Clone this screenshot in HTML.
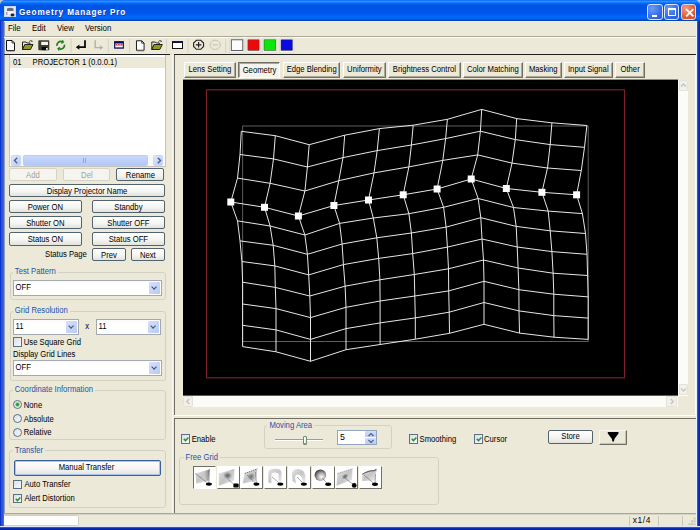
<!DOCTYPE html>
<html><head><meta charset="utf-8">
<style>
*{box-sizing:border-box;margin:0;padding:0}
html,body{width:700px;height:530px;overflow:hidden;background:#ece9d8}
body{position:relative;font-family:"Liberation Sans",sans-serif;font-size:7.7px;color:#000}
.a{position:absolute}
.t{position:absolute;white-space:nowrap;line-height:1;transform:translateY(0.4px) scaleY(1.12);transform-origin:0 84%}
.s{display:inline-block;transform:translateY(0.6px) scaleY(1.12);transform-origin:50% 80%}
/* XP button */
.btn{position:absolute;border:1px solid #53636e;border-radius:2px;background:linear-gradient(#fefefe 0%,#f5f5f1 55%,#e2e3de 100%);text-align:center;white-space:nowrap;line-height:11px;font-size:7.7px;color:#000}
.btn.dis{border-color:#d6d3c6;color:#a3a293;background:#f5f4ef}
.gb{position:absolute;border:1px solid #d3d1c3;border-radius:3px}
.gbl{position:absolute;transform:translateY(0.7px) scaleY(1.12);transform-origin:0 84%;color:#2354a8;background:#ece9d8;padding:0 2px;white-space:nowrap;line-height:1;font-size:7.7px}
.combo{position:absolute;border:1px solid #a3a9ae;background:linear-gradient(#fbfbfb,#fff 40%,#fdfdfc)}
.combo .dd{position:absolute;right:1px;top:1px;bottom:1px;width:11px;background:linear-gradient(135deg,#d6e0fa,#b8caf4);border-radius:1px}
.combo .dd:after{content:"";position:absolute;left:3.1px;top:2.6px;width:3.2px;height:3.2px;border-right:1.7px solid #3e4f70;border-bottom:1.7px solid #3e4f70;transform:rotate(45deg)}
.cb{position:absolute;width:9.2px;height:9.5px;border:1px solid #5b7084;background:linear-gradient(135deg,#d9e1e8,#f6f8fa)}
.rb{position:absolute;width:9px;height:9px;border:1px solid #5b7084;border-radius:50%;background:linear-gradient(135deg,#d9e1e8,#f6f8fa)}
.tab{position:absolute;top:62px;height:16px;border:1px solid;border-color:#fff #716f64 #716f64 #fff;box-shadow:inset -1px -1px 0 #aca899;text-align:center;line-height:14px;font-size:7.7px;white-space:nowrap}
.fg{position:absolute;top:466px;width:23px;height:23px;background:#fff;border:1px solid;border-color:#fff #716f64 #716f64 #fff}
</style></head><body>
<!-- frame -->
<div class="a" style="left:0;top:0;width:700px;height:8px;background:#b8c6e2"></div>
<div class="a" style="left:0;top:0;width:700px;height:22px;background:linear-gradient(#0058ee 0%,#3593ff 5%,#288eff 8%,#127dff 11%,#036ffc 14%,#0262ee 18%,#0057e5 24%,#0054e3 30%,#0055eb 56%,#005bf5 66%,#026afe 76%,#0062ef 84%,#0052d6 90%,#0040ab 95%,#003092 100%);border-radius:5px 5px 0 0"></div>
<div class="a" style="left:0;top:21px;width:4.5px;height:509px;background:linear-gradient(90deg,#0022cc,#2452d8 30%,#2f5ccc 60%,#6f82b0 85%,#c8cac8)"></div>
<div class="a" style="left:696px;top:21px;width:4px;height:509px;background:linear-gradient(90deg,#f4f8ff 0%,#e8eefa 18%,#5a78c0 28%,#1c3aa8 45%,#0a20a0 100%)"></div>
<div class="a" style="left:0;top:526px;width:700px;height:4px;background:linear-gradient(#e6eaf8 0%,#e0e6f8 15%,#4a6ac0 30%,#0a34b8 50%,#001e98 100%)"></div>
<div class="a" style="left:4px;top:21px;width:692px;height:1px;background:#e8ecf8"></div>
<!-- app icon -->
<svg class="a" style="left:4px;top:6px" width="12" height="11" viewBox="0 0 12 11"><rect x="0" y="0" width="12" height="11" fill="#dfe9f7"/><rect x="0.5" y="0.5" width="11" height="10" fill="none" stroke="#c9d8f2" stroke-width="1"/><path d="M3 2.5Q6 0.8 9.5 2.5V5H3Z" fill="#6d6a78"/><path d="M3.5 5H9V8H3.5Z" fill="#f4f1f0"/><ellipse cx="8.5" cy="9" rx="2" ry="1.4" fill="#222"/><rect x="2" y="6" width="1.5" height="3" fill="#b0aab0"/></svg>
<div class="t" style="left:18.9px;top:8.6px;font-size:8.2px;font-weight:bold;letter-spacing:0.86px;color:#fff;text-shadow:0.7px 0.7px 0 #1a3aa0">Geometry Manager Pro</div>
<!-- title buttons -->
<div class="a" style="left:647.2px;top:4px;width:15.4px;height:16px;border:1px solid #d8e4fb;border-radius:3px;background:radial-gradient(circle at 30% 25%,#6d9cfb,#3a6fe8 55%,#2458d6)"><div class="a" style="left:4px;top:9.5px;width:5px;height:2px;background:#fff"></div></div>
<div class="a" style="left:663.8px;top:4px;width:15.2px;height:16px;border:1px solid #d8e4fb;border-radius:3px;background:radial-gradient(circle at 30% 25%,#6d9cfb,#3a6fe8 55%,#2458d6)"><div class="a" style="left:3px;top:3px;width:8px;height:7.5px;border:1px solid #fff;border-top-width:2px"></div></div>
<div class="a" style="left:681px;top:4px;width:15.2px;height:16px;border:1px solid #e8d8f0;border-radius:3px;background:radial-gradient(circle at 30% 25%,#f49a7c,#e0613a 55%,#cc4a22)">
<svg class="a" style="left:2.5px;top:2.5px" width="10" height="10" viewBox="0 0 10 10"><path d="M1.2 1.2L8.4 8.4M8.4 1.2L1.2 8.4" stroke="#fff" stroke-width="1.7"/></svg></div>
<!-- menu -->
<div class="t" style="left:8px;top:25px;font-size:7.9px">File</div>
<div class="t" style="left:32px;top:25px;font-size:7.9px">Edit</div>
<div class="t" style="left:57px;top:25px;font-size:7.9px">View</div>
<div class="t" style="left:85px;top:25px;font-size:7.9px">Version</div>
<div class="a" style="left:4px;top:36px;width:692px;height:1px;background:#aca899"></div>
<div class="a" style="left:4px;top:37px;width:692px;height:1px;background:#fff"></div>
<!-- toolbar dark line -->
<div class="a" style="left:4px;top:54px;width:166px;height:1px;background:#1e1e1e"></div>
<div class="a" style="left:174px;top:54px;width:522px;height:1px;background:#1e1e1e"></div>
<!-- toolbar icons -->
<svg class="a" style="left:0;top:37px" width="300" height="17" viewBox="0 37 300 17">
<defs>
<g id="doc"><path d="M0.5 0.5H6L8.5 3V10.5H0.5Z" fill="#fdfdfd" stroke="#111" stroke-width="1"/><path d="M6 0.5V3H8.5" fill="none" stroke="#111" stroke-width="0.8"/><path d="M1 11.2H8.5" stroke="#888" stroke-width="0.8"/></g>
<g id="fold"><path d="M0.5 2.5H4L5 3.5H8V5H3L0.5 10Z" fill="#f0eab0" stroke="#222" stroke-width="1"/><path d="M0.5 10L2.8 5H11L8.5 10Z" fill="#8f9a1c" stroke="#222" stroke-width="1"/><path d="M7 2.2Q8.5 0 10.5 1.8" fill="none" stroke="#555" stroke-width="1"/><path d="M9.5 0.8L10.8 2.2L9.2 2.8" fill="#555"/></g>
</defs>
<use href="#doc" x="6" y="40"/>
<use href="#fold" x="22" y="39.5"/>
<!-- floppy -->
<rect x="38.3" y="40.3" width="11" height="10" rx="0.8" fill="#3b3b30"/>
<rect x="41.2" y="41.8" width="6.8" height="3.2" fill="#f2f2ec"/>
<rect x="41.8" y="47" width="4.8" height="3.2" fill="#050505"/>
<rect x="46" y="48" width="1.8" height="1.8" fill="#e8e8e8"/>
<!-- refresh -->
<path d="M56.96 45.96A3.8 3.8 0 0 1 62 41.73" fill="none" stroke="#1f7f1f" stroke-width="1.7"/>
<path d="M61.39 43.42L62.61 40.04L63.9 42.4Z" fill="#1f7f1f" stroke="#1f7f1f" stroke-width="0.6"/>
<path d="M64.44 44.64A3.8 3.8 0 0 1 59.4 48.87" fill="none" stroke="#1f7f1f" stroke-width="1.7"/>
<path d="M60.01 47.18L58.79 50.56L57.5 48.2Z" fill="#1f7f1f" stroke="#1f7f1f" stroke-width="0.6"/>
<rect x="70.6" y="39" width="1" height="14" fill="#d6d3c4"/>
<!-- enter arrow -->
<path d="M85 40.2V47.2H78" fill="none" stroke="#0a0a0a" stroke-width="1.8"/>
<path d="M75.8 47.2L79.4 44.6V49.8Z" fill="#0a0a0a"/>
<!-- disabled arrow -->
<path d="M95.2 40.2V47.6H101" fill="none" stroke="#b4b2a6" stroke-width="1.4"/>
<path d="M103.2 47.6L100 45.2V50Z" fill="#b4b2a6"/>
<rect x="107.8" y="39" width="1" height="14" fill="#d6d3c4"/>
<!-- display icon -->
<rect x="114.1" y="41.1" width="9.8" height="7.6" fill="#0a0a50"/>
<rect x="115.2" y="43.4" width="7.6" height="2.4" fill="#d8c8e0"/>
<rect x="115.2" y="45.8" width="7.6" height="1.6" fill="#f4f4f8"/>
<path d="M115.6 44.6H122.5" stroke="#c82848" stroke-width="1" stroke-dasharray="1.6 0.9"/>
<rect x="129.1" y="39" width="1" height="14" fill="#d6d3c4"/>
<use href="#doc" x="136" y="40.3" transform="translate(136 40.3) scale(0.95) translate(-136 -40.3)"/>
<use href="#fold" x="151.3" y="39.5"/>
<rect x="166" y="39" width="1" height="14" fill="#d6d3c4"/>
<!-- window icon -->
<rect x="172.5" y="41.5" width="10" height="7" fill="#fff" stroke="#111" stroke-width="1"/>
<rect x="172.5" y="41" width="10" height="2" fill="#101050"/>
<rect x="187.6" y="39" width="1" height="14" fill="#d6d3c4"/>
<!-- plus octagon -->
<path d="M196.4 40.3H200.8L203.6 43.1V46.5L200.8 49.3H196.4L193.6 46.5V43.1Z" fill="none" stroke="#222" stroke-width="1.1"/>
<path d="M198.6 42V47.6M195.8 44.8H201.4" stroke="#222" stroke-width="1.2"/>
<!-- minus octagon disabled -->
<path d="M213 40.3H217.4L220.2 43.1V46.5L217.4 49.3H213L210.2 46.5V43.1Z" fill="none" stroke="#c4c2b6" stroke-width="1"/>
<path d="M212.4 44.8H218" stroke="#c4c2b6" stroke-width="1"/>
<rect x="225.2" y="39" width="1" height="14" fill="#d6d3c4"/>
<!-- color swatches -->
<rect x="229.6" y="38" width="14.4" height="15" rx="1.5" fill="#f6f5ef" stroke="#d8d6ca" stroke-width="0.8"/>
<rect x="231.3" y="39.8" width="11.5" height="10.6" fill="#fcfcfc" stroke="#3a3a3a" stroke-width="0.8"/>
<rect x="246.2" y="38" width="14.4" height="15" rx="1.5" fill="#f6f5ef" stroke="#d8d6ca" stroke-width="0.8"/>
<rect x="247.9" y="39.8" width="11.2" height="10.6" fill="#ee0a0a" stroke="#3a3a3a" stroke-width="0.5"/>
<rect x="262.4" y="38" width="14.4" height="15" rx="1.5" fill="#f6f5ef" stroke="#d8d6ca" stroke-width="0.8"/>
<rect x="264" y="39.8" width="11.8" height="10.6" fill="#0ae80a" stroke="#3a3a3a" stroke-width="0.5"/>
<rect x="279.4" y="38" width="14.4" height="15" rx="1.5" fill="#f6f5ef" stroke="#d8d6ca" stroke-width="0.8"/>
<rect x="281" y="39.8" width="11.4" height="10.6" fill="#0a0ae0" stroke="#3a3a3a" stroke-width="0.5"/>
</svg>
<!-- LEFT PANEL -->
<div class="a" style="left:8.5px;top:55px;width:157px;height:112px;background:#fff;border:1px solid #c4c4bc;border-top:none"></div>
<div class="a" style="left:9.5px;top:56.8px;width:155px;height:10.9px;background:#ece9d8"></div>
<div class="t" style="left:13px;top:58.8px">01</div>
<div class="t" style="left:32.5px;top:58.8px">PROJECTOR 1 (0.0.0.1)</div>
<!-- list h scrollbar -->
<div class="a" style="left:9.5px;top:155px;width:155px;height:11px;background:#f8f8f4"></div>
<div class="a" style="left:10.8px;top:155.3px;width:10.4px;height:10.3px;background:linear-gradient(135deg,#dfe8fd,#b9cbf6);border-radius:1.5px;border:1px solid #c8d6f8"></div>
<svg class="a" style="left:13px;top:157px" width="6" height="7" viewBox="0 0 6 7"><path d="M4.2 0.8L1.5 3.5L4.2 6.2" fill="none" stroke="#4d6185" stroke-width="1.4"/></svg>
<div class="a" style="left:23px;top:155.3px;width:125px;height:10.3px;background:linear-gradient(#c9d8fc,#b3c8f6);border-radius:1.5px;border:1px solid #bccbf2"></div>
<div class="a" style="left:83px;top:158px;width:3px;height:5px;border-left:1px solid #8ea6e6;border-right:1px solid #8ea6e6"></div>
<div class="a" style="left:153px;top:155.3px;width:10.4px;height:10.3px;background:linear-gradient(135deg,#dfe8fd,#b9cbf6);border-radius:1.5px;border:1px solid #c8d6f8"></div>
<svg class="a" style="left:155.5px;top:157px" width="6" height="7" viewBox="0 0 6 7"><path d="M1.8 0.8L4.5 3.5L1.8 6.2" fill="none" stroke="#4d6185" stroke-width="1.4"/></svg>
<!-- buttons -->
<div class="btn dis" style="left:9.3px;top:168.3px;width:47.3px;height:13px"><span class="s">Add</span></div>
<div class="btn dis" style="left:63.4px;top:168.3px;width:47px;height:13px"><span class="s">Del</span></div>
<div class="btn" style="left:116.3px;top:168.4px;width:48.2px;height:12.8px"><span class="s">Rename</span></div>
<div class="btn" style="left:9px;top:184.3px;width:156px;height:13px"><span class="s">Display Projector Name</span></div>
<div class="btn" style="left:9.2px;top:200.4px;width:72.4px;height:12.8px"><span class="s">Power ON</span></div>
<div class="btn" style="left:92px;top:200.4px;width:72.8px;height:12.8px"><span class="s">Standby</span></div>
<div class="btn" style="left:9.2px;top:216.4px;width:72.4px;height:12.9px"><span class="s">Shutter ON</span></div>
<div class="btn" style="left:92px;top:216.4px;width:72.8px;height:12.9px"><span class="s">Shutter OFF</span></div>
<div class="btn" style="left:9.2px;top:232.4px;width:72.4px;height:13.2px"><span class="s">Status ON</span></div>
<div class="btn" style="left:92px;top:232.4px;width:72.8px;height:13.2px"><span class="s">Status OFF</span></div>
<div class="t" style="left:45px;top:250.5px">Status Page</div>
<div class="btn" style="left:92px;top:247.8px;width:34px;height:13px"><span class="s">Prev</span></div>
<div class="btn" style="left:130.6px;top:247.8px;width:34.4px;height:13px"><span class="s">Next</span></div>
<!-- Test pattern -->
<div class="gb" style="left:9.5px;top:271.5px;width:156px;height:28px"></div>
<div class="gbl" style="left:12.8px;top:266.5px">Test Pattern</div>
<div class="combo" style="left:13.2px;top:280px;width:148.6px;height:15.7px"><div class="dd"></div></div>
<div class="t" style="left:15.6px;top:284.3px">OFF</div>
<!-- Grid resolution -->
<div class="gb" style="left:9.5px;top:311px;width:156px;height:69.5px"></div>
<div class="gbl" style="left:12.8px;top:306.0px">Grid Resolution</div>
<div class="combo" style="left:13.2px;top:319px;width:65.4px;height:15.6px"><div class="dd"></div></div>
<div class="t" style="left:15.6px;top:323.3px">11</div>
<div class="t" style="left:85.3px;top:323px">x</div>
<div class="combo" style="left:96.1px;top:319px;width:65.1px;height:15.6px"><div class="dd"></div></div>
<div class="t" style="left:98.5px;top:323.3px">11</div>
<div class="cb" style="left:13.2px;top:337.2px"></div>
<div class="t" style="left:23.8px;top:338.5px">Use Square Grid</div>
<div class="t" style="left:13px;top:351px">Display Grid Lines</div>
<div class="combo" style="left:13.2px;top:360px;width:148.6px;height:15.8px"><div class="dd"></div></div>
<div class="t" style="left:15.6px;top:364.3px">OFF</div>
<!-- Coordinate information -->
<div class="gb" style="left:9.2px;top:390px;width:156.5px;height:50px"></div>
<div class="gbl" style="left:12.8px;top:385.0px">Coordinate Information</div>
<div class="rb" style="left:13.2px;top:399.8px;background:radial-gradient(circle,#2a8a3a 0,#3a9a46 1.1px,#a8dca8 2.1px,#eef8ee 3.3px)"></div>
<div class="t" style="left:23.8px;top:401.5px">None</div>
<div class="rb" style="left:13.2px;top:413.9px"></div>
<div class="t" style="left:23.8px;top:415.5px">Absolute</div>
<div class="rb" style="left:13.2px;top:427.8px"></div>
<div class="t" style="left:23.8px;top:429px">Relative</div>
<!-- Transfer -->
<div class="gb" style="left:9.2px;top:450.3px;width:156.5px;height:58px"></div>
<div class="gbl" style="left:12.8px;top:445.5px">Transfer</div>
<div class="btn" style="left:13.9px;top:460.2px;width:147.1px;height:16.1px;line-height:14px;padding-right:2px;border-color:#3d5e9c;box-shadow:inset 0 0 0 1px #aac4ef"><span class="s">Manual Transfer</span></div>
<div class="cb" style="left:13.2px;top:479.6px"></div>
<div class="t" style="left:24.4px;top:481px">Auto Transfer</div>
<div class="cb" style="left:13.2px;top:493.5px"><svg class="a" style="left:0;top:0" width="8" height="8" viewBox="0 0 8 8"><path d="M1.8 3.9L3.5 5.6L6.4 2.4" fill="none" stroke="#2b8f3b" stroke-width="1.5"/></svg></div>
<div class="t" style="left:24.4px;top:495px">Alert Distortion</div>
<!-- splitter -->
<div class="a" style="left:171.5px;top:55px;width:1px;height:458px;background:#fbfaf5"></div>
<!-- RIGHT TOP PANEL -->
<div class="a" style="left:174.3px;top:55px;width:1.1px;height:359.5px;background:#716f64"></div>
<div class="a" style="left:174px;top:415px;width:522px;height:1px;background:#fff"></div>
<div class="a" style="left:695px;top:55px;width:1px;height:361px;background:#fbfaf3"></div>
<!-- tabs -->
<div class="tab" style="left:184px;width:51.8px"><span class="s">Lens Setting</span></div>
<div class="tab" style="left:238px;top:61.8px;height:16.4px;width:42.0px;padding-left:1px;border-color:#716f64 #fff #fff #716f64;box-shadow:inset 1px 1px 0 #aca899;background:#f4f3ee;line-height:15.5px"><span class="s">Geometry</span></div>
<div class="tab" style="left:283px;width:57.3px"><span class="s">Edge Blending</span></div>
<div class="tab" style="left:343px;width:42.8px"><span class="s">Uniformity</span></div>
<div class="tab" style="left:388px;width:72.8px"><span class="s">Brightness Control</span></div>
<div class="tab" style="left:463px;width:59.8px"><span class="s">Color Matching</span></div>
<div class="tab" style="left:524.5px;width:37.5px"><span class="s">Masking</span></div>
<div class="tab" style="left:563.8px;width:49.0px"><span class="s">Input Signal</span></div>
<div class="tab" style="left:614.8px;width:30.6px"><span class="s">Other</span></div>
<!-- view -->
<svg class="a" style="left:0;top:0" width="700" height="530" viewBox="0 0 700 530">
<rect x="183" y="79.6" width="495" height="316" fill="#000"/>
<rect x="206.5" y="89.8" width="418" height="288" fill="none" stroke="#80202c" stroke-width="1.1"/>
<rect x="242.6" y="126" width="345.6" height="215.5" fill="none" stroke="#5c5c5c" stroke-width="1"/>
<g fill="none" stroke="#f2f2f2" stroke-width="0.95">
<polyline points="241.3,131.3 275.3,135.7 309.2,144.7 344.7,135.2 379.4,128.6 413.2,125.2 447.4,119.3 481.7,109.4 516.7,118.6 551.9,122.8 586.9,125.5"/>
<polyline points="240.0,154.5 273.5,158.9 307.4,167.0 343.0,157.6 377.2,150.6 411.4,145.0 445.6,138.6 480.4,131.2 515.3,139.6 550.2,144.6 584.5,147.3"/>
<polyline points="237.5,178.1 270.1,183.3 304.9,191.0 338.8,180.7 374.0,172.9 408.9,166.9 442.8,160.4 477.7,154.9 512.0,163.1 547.5,168.0 581.3,170.5"/>
<polyline points="230.8,202.0 264.5,207.3 298.4,216.0 333.9,205.5 368.5,200.0 403.2,194.8 437.1,189.0 471.2,179.0 506.3,188.5 541.9,192.3 576.6,194.8"/>
<polyline points="237.5,220.9 270.1,226.0 304.9,235.0 339.6,223.4 373.3,218.0 408.9,213.7 443.6,207.3 478.2,198.5 513.5,207.5 548.2,211.1 582.4,213.6"/>
<polyline points="240.0,240.9 273.2,245.3 307.4,254.3 342.1,244.0 376.8,237.8 411.4,233.0 446.1,227.1 480.8,217.7 516.2,226.4 550.2,230.8 585.5,233.5"/>
<polyline points="241.9,261.5 274.8,265.9 308.7,274.9 343.4,264.6 378.7,258.4 412.7,253.6 447.4,247.1 482.0,239.0 517.2,247.0 551.9,251.6 587.0,254.3"/>
<polyline points="242.6,282.2 275.3,287.4 309.8,296.0 345.1,286.2 379.9,279.8 414.3,274.5 448.5,268.8 483.5,260.0 518.1,268.0 553.1,273.2 587.6,275.5"/>
<polyline points="242.6,304.0 276.0,308.6 310.5,317.6 346.0,307.3 380.1,301.0 414.8,296.0 448.7,290.9 484.0,281.3 518.9,289.7 553.8,294.2 588.2,296.9"/>
<polyline points="242.6,325.3 276.0,329.9 310.5,339.4 346.0,328.6 380.1,322.9 415.3,317.9 449.2,312.2 484.0,302.5 519.0,310.9 553.8,315.6 588.2,318.1"/>
<polyline points="242.6,346.6 276.0,351.8 310.5,361.3 346.0,349.7 380.1,344.5 415.3,339.2 449.5,333.3 484.0,324.3 519.5,333.1 554.0,337.2 588.2,339.4"/>
<polyline points="241.3,131.3 240.0,154.5 237.5,178.1 230.8,202.0 237.5,220.9 240.0,240.9 241.9,261.5 242.6,282.2 242.6,304.0 242.6,325.3 242.6,346.6"/>
<polyline points="275.3,135.7 273.5,158.9 270.1,183.3 264.5,207.3 270.1,226.0 273.2,245.3 274.8,265.9 275.3,287.4 276.0,308.6 276.0,329.9 276.0,351.8"/>
<polyline points="309.2,144.7 307.4,167.0 304.9,191.0 298.4,216.0 304.9,235.0 307.4,254.3 308.7,274.9 309.8,296.0 310.5,317.6 310.5,339.4 310.5,361.3"/>
<polyline points="344.7,135.2 343.0,157.6 338.8,180.7 333.9,205.5 339.6,223.4 342.1,244.0 343.4,264.6 345.1,286.2 346.0,307.3 346.0,328.6 346.0,349.7"/>
<polyline points="379.4,128.6 377.2,150.6 374.0,172.9 368.5,200.0 373.3,218.0 376.8,237.8 378.7,258.4 379.9,279.8 380.1,301.0 380.1,322.9 380.1,344.5"/>
<polyline points="413.2,125.2 411.4,145.0 408.9,166.9 403.2,194.8 408.9,213.7 411.4,233.0 412.7,253.6 414.3,274.5 414.8,296.0 415.3,317.9 415.3,339.2"/>
<polyline points="447.4,119.3 445.6,138.6 442.8,160.4 437.1,189.0 443.6,207.3 446.1,227.1 447.4,247.1 448.5,268.8 448.7,290.9 449.2,312.2 449.5,333.3"/>
<polyline points="481.7,109.4 480.4,131.2 477.7,154.9 471.2,179.0 478.2,198.5 480.8,217.7 482.0,239.0 483.5,260.0 484.0,281.3 484.0,302.5 484.0,324.3"/>
<polyline points="516.7,118.6 515.3,139.6 512.0,163.1 506.3,188.5 513.5,207.5 516.2,226.4 517.2,247.0 518.1,268.0 518.9,289.7 519.0,310.9 519.5,333.1"/>
<polyline points="551.9,122.8 550.2,144.6 547.5,168.0 541.9,192.3 548.2,211.1 550.2,230.8 551.9,251.6 553.1,273.2 553.8,294.2 553.8,315.6 554.0,337.2"/>
<polyline points="586.9,125.5 584.5,147.3 581.3,170.5 576.6,194.8 582.4,213.6 585.5,233.5 587.0,254.3 587.6,275.5 588.2,296.9 588.2,318.1 588.2,339.4"/>
</g>
<g fill="#fff"><rect x="227.3" y="198.5" width="7" height="7"/><rect x="261.0" y="203.8" width="7" height="7"/><rect x="294.9" y="212.5" width="7" height="7"/><rect x="330.4" y="202.0" width="7" height="7"/><rect x="365.0" y="196.5" width="7" height="7"/><rect x="399.7" y="191.3" width="7" height="7"/><rect x="433.6" y="185.5" width="7" height="7"/><rect x="467.7" y="175.5" width="7" height="7"/><rect x="502.8" y="185.0" width="7" height="7"/><rect x="538.4" y="188.8" width="7" height="7"/><rect x="573.1" y="191.3" width="7" height="7"/></g>
</svg>
<!-- scrollbars -->
<div class="a" style="left:678.3px;top:79.6px;width:9.7px;height:316px;background:#fbfbf8"></div>
<div class="a" style="left:678.6px;top:80px;width:9.2px;height:11.4px;background:#f1f0ea;border:1px solid #e4e3da;border-radius:1px"></div>
<svg class="a" style="left:680px;top:82px" width="7" height="6" viewBox="0 0 7 6"><path d="M1 4.5L3.5 2L6 4.5" fill="none" stroke="#c5c4b8" stroke-width="1.3"/></svg>
<div class="a" style="left:678.6px;top:384px;width:9.2px;height:11px;background:#f1f0ea;border:1px solid #e4e3da;border-radius:1px"></div>
<svg class="a" style="left:680px;top:386.5px" width="7" height="6" viewBox="0 0 7 6"><path d="M1 1.5L3.5 4L6 1.5" fill="none" stroke="#c5c4b8" stroke-width="1.3"/></svg>
<div class="a" style="left:183px;top:395.6px;width:495px;height:11.8px;background:#fbfbf8"></div>
<div class="a" style="left:183px;top:396.3px;width:10.4px;height:10.6px;background:#f1f0ea;border:1px solid #e4e3da;border-radius:1px"></div>
<svg class="a" style="left:185px;top:398px" width="6" height="7" viewBox="0 0 6 7"><path d="M4.2 1L1.7 3.5L4.2 6" fill="none" stroke="#c5c4b8" stroke-width="1.3"/></svg>
<div class="a" style="left:666px;top:396.3px;width:11px;height:10.6px;background:#f1f0ea;border:1px solid #e4e3da;border-radius:1px"></div>
<svg class="a" style="left:668.5px;top:398px" width="6" height="7" viewBox="0 0 6 7"><path d="M1.8 1L4.3 3.5L1.8 6" fill="none" stroke="#c5c4b8" stroke-width="1.3"/></svg>
<!-- BOTTOM PANEL -->
<div class="a" style="left:174px;top:418px;width:522px;height:1.3px;background:#716f64"></div>
<div class="a" style="left:174.3px;top:418px;width:1.1px;height:94.5px;background:#716f64"></div>
<div class="cb" style="left:181px;top:434.4px"><svg class="a" style="left:0;top:0" width="8" height="8" viewBox="0 0 8 8"><path d="M1.8 3.9L3.5 5.6L6.4 2.4" fill="none" stroke="#2b8f3b" stroke-width="1.5"/></svg></div>
<div class="t" style="left:191.7px;top:435.7px">Enable</div>
<div class="gb" style="left:263.5px;top:425.3px;width:128.7px;height:24px"></div>
<div class="gbl" style="left:267.4px;top:421px">Moving Area</div>
<div class="a" style="left:275px;top:438.7px;width:47.7px;height:2px;border-top:1px solid #9d9c98;border-bottom:1px solid #fff"></div>
<div class="a" style="left:302.6px;top:436px;width:4.6px;height:8.7px;border:1px solid #6e8f6e;border-radius:1px;background:linear-gradient(90deg,#fff,#e8efe6);box-shadow:inset 0 -1px 0 #5cc25c"></div>
<div class="a" style="left:336.9px;top:429.9px;width:40px;height:14.8px;border:1px solid #8fa6bd;background:#fff"></div>
<div class="t" style="left:340px;top:433.3px;font-size:8.8px">5</div>
<div class="a" style="left:365.4px;top:430.8px;width:10.6px;height:6.5px;background:linear-gradient(#d2ddf9,#b9caf3);border-radius:1px"></div>
<div class="a" style="left:365.4px;top:437.5px;width:10.6px;height:6.5px;background:linear-gradient(#d2ddf9,#b9caf3);border-radius:1px"></div>
<svg class="a" style="left:367px;top:431.5px" width="8" height="12" viewBox="0 0 8 12"><path d="M1.5 4L4 1.5L6.5 4M1.5 8L4 10.5L6.5 8" fill="none" stroke="#4d6185" stroke-width="1.2"/></svg>
<div class="cb" style="left:408.6px;top:434.4px"><svg class="a" style="left:0;top:0" width="8" height="8" viewBox="0 0 8 8"><path d="M1.8 3.9L3.5 5.6L6.4 2.4" fill="none" stroke="#2b8f3b" stroke-width="1.5"/></svg></div>
<div class="t" style="left:419.5px;top:435.7px">Smoothing</div>
<div class="cb" style="left:473.7px;top:434.4px"><svg class="a" style="left:0;top:0" width="8" height="8" viewBox="0 0 8 8"><path d="M1.8 3.9L3.5 5.6L6.4 2.4" fill="none" stroke="#2b8f3b" stroke-width="1.5"/></svg></div>
<div class="t" style="left:484px;top:435.7px">Cursor</div>
<div class="btn" style="left:548px;top:430px;width:45px;height:13.6px;line-height:11.6px"><span class="s">Store</span></div>
<div class="a" style="left:598.9px;top:429.7px;width:28.2px;height:15px;border:1px solid;border-color:#f6f5ee #716f64 #716f64 #f6f5ee;box-shadow:inset -1px -1px 0 #c4c1b2"></div>
<svg class="a" style="left:600px;top:430px" width="26" height="14" viewBox="600 430 26 14"><path d="M607.8 432H618.5V433.4L614.5 438.8L613.9 441.6H612.4L611.8 438.8L607.8 433.4Z" fill="#000"/></svg>
<div class="gb" style="left:179px;top:456.9px;width:259.5px;height:48px"></div>
<div class="gbl" style="left:183.5px;top:452.5px">Free Grid</div>
<svg width="0" height="0" style="position:absolute"><defs>
<linearGradient id="g1" x1="0" y1="0" x2="1" y2="1"><stop offset="0" stop-color="#e4e4e4"/><stop offset="0.5" stop-color="#c4c4c4"/><stop offset="1" stop-color="#f0f0f0"/></linearGradient>
<linearGradient id="g2" x1="1" y1="0" x2="0" y2="0"><stop offset="0" stop-color="#6a6a6a"/><stop offset="1" stop-color="#e0e0e0" stop-opacity="0"/></linearGradient>
<radialGradient id="g3"><stop offset="0" stop-color="#5a5a5a"/><stop offset="1" stop-color="#cfcfcf"/></radialGradient>
<radialGradient id="g4" cx="0.6" cy="0.65" r="0.75"><stop offset="0" stop-color="#fff"/><stop offset="0.45" stop-color="#aaa"/><stop offset="1" stop-color="#1a1a1a"/></radialGradient>
</defs></svg>
<div class="fg" style="left:192.9px;border-color:#716f64 #fff #fff #716f64"><svg class="a" style="left:0;top:0" width="22" height="22" viewBox="0 0 22 22"><path d="M1.4 6.5L15.6 2.2L14.6 14L2.3 16.4Z" fill="url(#g1)"/><path d="M8 5L15.2 2.6L14.4 13.6L9 14.6Z" fill="url(#g2)" opacity="0.85"/><path d="M1.4 6.5L14.8 17M15.6 2.2L14.8 17" stroke="#555" stroke-width="0.5"/><ellipse cx="14.9" cy="17.1" rx="3" ry="1.7" fill="#000"/></svg></div>
<div class="fg" style="left:216.5px;border-color:#fff #716f64 #716f64 #fff"><svg class="a" style="left:0;top:0" width="22" height="22" viewBox="0 0 22 22"><path d="M0.9 6.5L16.4 1.8L16 13.6L0.9 18.8Z" fill="url(#g1)"/><ellipse cx="9.6" cy="8.6" rx="4.6" ry="4" fill="url(#g3)"/><path d="M9.6 12L17.5 18.5" stroke="#555" stroke-width="0.5"/><rect x="15.4" y="16.4" width="5.3" height="4.2" rx="1.2" fill="#000"/></svg></div>
<div class="fg" style="left:240.1px;border-color:#fff #716f64 #716f64 #fff"><svg class="a" style="left:0;top:0" width="22" height="22" viewBox="0 0 22 22"><path d="M3.6 6.5L16.4 1.8L15 14L1.7 16.4Z" fill="url(#g1)"/><path d="M3.6 6.5L16.4 1.8" stroke="#777" stroke-width="1" stroke-dasharray="1.5 0.7"/><path d="M6 8L14.5 5V13L7 14Z" fill="url(#g3)" opacity="0.8"/><path d="M6 8L15.4 17M14.5 5L15.4 17" stroke="#555" stroke-width="0.5"/><ellipse cx="15.4" cy="17.1" rx="3" ry="1.7" fill="#000"/></svg></div>
<div class="fg" style="left:263.9px;border-color:#fff #716f64 #716f64 #fff"><svg class="a" style="left:0;top:0" width="22" height="22" viewBox="0 0 22 22"><path d="M3.3 15.5V6Q3.3 1.8 10 1.8Q16.6 1.8 16.6 6V14.5H13.6V7.5Q13.6 5.5 10 5.5Q6.4 5.5 6.4 8V16.4Z" fill="url(#g1)"/><path d="M7 10L15.3 17" stroke="#555" stroke-width="0.5"/><ellipse cx="15.3" cy="17.1" rx="3" ry="1.7" fill="#000"/></svg></div>
<div class="fg" style="left:288.3px;border-color:#fff #716f64 #716f64 #fff"><svg class="a" style="left:0;top:0" width="22" height="22" viewBox="0 0 22 22"><path d="M2.8 7Q3.5 1.8 9.5 2Q15.5 2.6 16.5 9V15H13.8Q13.5 8.5 9.5 7.5Q5.8 7 6.2 11.5L7 16.5L3.5 14Z" fill="url(#g1)"/><path d="M8 10L14.9 17" stroke="#555" stroke-width="0.5"/><ellipse cx="14.9" cy="17.1" rx="3" ry="1.7" fill="#000"/></svg></div>
<div class="fg" style="left:311.8px;border-color:#fff #716f64 #716f64 #fff"><svg class="a" style="left:0;top:0" width="22" height="22" viewBox="0 0 22 22"><circle cx="7.4" cy="8.2" r="5.8" fill="url(#g4)"/><path d="M9 11L15.2 17.3" stroke="#555" stroke-width="0.5"/><ellipse cx="15.2" cy="17.3" rx="3" ry="1.7" fill="#000"/></svg></div>
<div class="fg" style="left:335.4px;border-color:#fff #716f64 #716f64 #fff"><svg class="a" style="left:0;top:0" width="22" height="22" viewBox="0 0 22 22"><path d="M1.4 6.5L16.5 1.8L16 13L0.5 18.8Z" fill="url(#g1)"/><path d="M1.4 6.5L16.5 1.8" stroke="#999" stroke-width="0.8" stroke-dasharray="1.5 0.7"/><ellipse cx="9" cy="9.5" rx="4" ry="2.6" transform="rotate(-35 9 9.5)" fill="url(#g3)"/><path d="M9 11L18 18.2" stroke="#555" stroke-width="0.5"/><circle cx="18.2" cy="18.4" r="2.4" fill="#000"/></svg></div>
<div class="fg" style="left:359.0px;border-color:#fff #716f64 #716f64 #fff"><svg class="a" style="left:0;top:0" width="22" height="22" viewBox="0 0 22 22"><path d="M2.3 7.4Q8 3.5 14 3.6Q16 3.2 16.2 1.8L16.8 3.2Q16 6 15.5 7V13.5L2.3 14Z" fill="url(#g1)"/><path d="M2.3 7.4Q8 3.5 14 3.6Q16 3.2 16.2 1.8" fill="none" stroke="#666" stroke-width="1.1"/><path d="M4 8L15 17.3M15.5 7L15 17.3" stroke="#555" stroke-width="0.5"/><ellipse cx="15" cy="17.3" rx="3" ry="1.7" fill="#000"/></svg></div>

<!-- status bar -->
<div class="a" style="left:4px;top:512.5px;width:692px;height:1px;background:#aca899"></div>
<div class="a" style="left:4px;top:513.5px;width:692px;height:1px;background:#d6d3c5"></div>
<div class="a" style="left:3.6px;top:514.8px;width:75.4px;height:11.2px;background:#fdfdfb;border:1px solid #d2d0c4;border-left:none;border-radius:0 2px 2px 0"></div>
<div class="a" style="left:629px;top:516px;width:1px;height:10px;background:#c9c7ba"></div>
<div class="a" style="left:657.6px;top:516px;width:1px;height:10px;background:#c9c7ba"></div>
<div class="a" style="left:681.8px;top:516px;width:1px;height:10px;background:#c9c7ba"></div>
<div class="t" style="left:632.8px;top:516.3px;font-size:8.4px;letter-spacing:0.6px">x1/4</div>
<svg class="a" style="left:688px;top:517px" width="8" height="9" viewBox="0 0 8 9"><g fill="#c8c5b6"><rect x="5.5" y="0.5" width="2" height="2"/><rect x="3" y="3.3" width="2" height="2"/><rect x="5.5" y="3.3" width="2" height="2"/><rect x="0.5" y="6.2" width="2" height="2"/><rect x="3" y="6.2" width="2" height="2"/><rect x="5.5" y="6.2" width="2" height="2"/></g></svg>

</body></html>
